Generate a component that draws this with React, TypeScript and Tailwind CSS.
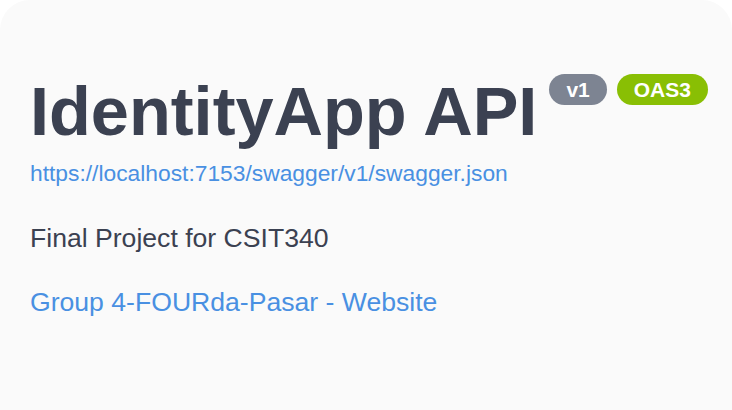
const Badge = ({ label, color }: { label: string; color: string }) => (
  <span
    className={`inline-block h-[31px] rounded-full px-[17px] text-[21px] font-bold leading-[31px] text-white ${color}`}
  >
    {label}
  </span>
)

export default function App() {
  return (
    <div className="min-h-[410px] bg-white font-['Liberation_Sans',Arial,sans-serif]">
      <div className="min-h-[410px] rounded-t-[30px] bg-[#fafafa] pl-[30px] pt-[72px]">
        <div className="flex items-start">
          <h1 className="text-[68.5px] font-bold leading-[80px] text-[#3b4151]">IdentityApp API</h1>
          <div className="ml-[12px] mt-[2px] flex gap-[10px]">
            <Badge label="v1" color="bg-[#7d8492]" />
            <Badge label="OAS3" color="bg-[#89bf04]" />
          </div>
        </div>
        <a className="mt-[8px] block text-[22.8px] leading-[26px] text-[#4990e2]">
          https://localhost:7153/swagger/v1/swagger.json
        </a>
        <p className="mt-[36px] text-[26.6px] leading-[32px] text-[#3b4151]">Final Project for CSIT340</p>
        <a className="mt-[32px] block text-[26.6px] leading-[32px] text-[#4990e2]">
          Group 4-FOURda-Pasar - Website
        </a>
      </div>
    </div>
  )
}
